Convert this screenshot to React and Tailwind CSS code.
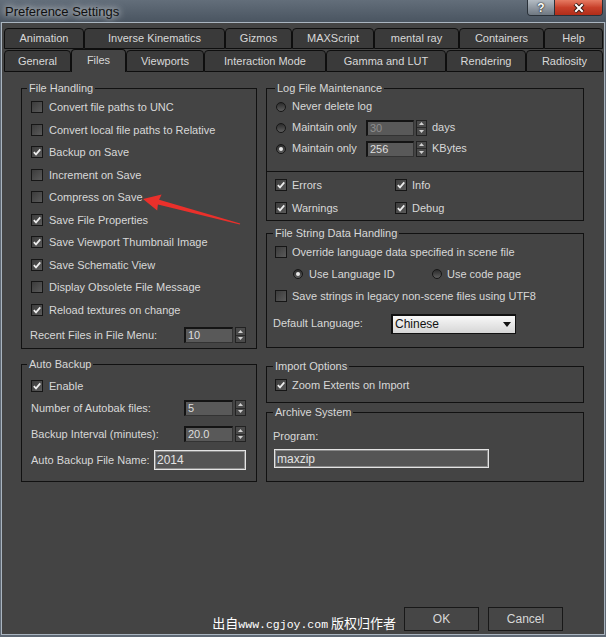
import React from "react";

const row1 = [
  ["Animation", "w-[80px]"],
  ["Inverse Kinematics", "w-[141px]"],
  ["Gizmos", "w-[67px]"],
  ["MAXScript", "w-[82px]"],
  ["mental ray", "w-[85px]"],
  ["Containers", "w-[85px]"],
  ["Help", "w-[59px]"],
];

const row2 = [
  ["General", "w-[67px]"],
  ["Files", "w-[55px]", true],
  ["Viewports", "w-[78px]"],
  ["Interaction Mode", "w-[122px]"],
  ["Gamma and LUT", "w-[120px]"],
  ["Rendering", "w-[80px]"],
  ["Radiosity", "w-[77px]"],
];

const fileHandling = [
  ["Convert file paths to UNC", false],
  ["Convert local file paths to Relative", false],
  ["Backup on Save", true],
  ["Increment on Save", false],
  ["Compress on Save", false],
  ["Save File Properties", true],
  ["Save Viewport Thumbnail Image", true],
  ["Save Schematic View", true],
  ["Display Obsolete File Message", false],
  ["Reload textures on change", true],
];

function Check({ on }) {
  return (
    <span className="w-[12px] h-[12px] shrink-0 border border-[#161616] bg-linear-to-br from-[#3c3c3c] to-[#5a5a5a] flex items-center justify-center">
      {on && (
        <svg width="10" height="10" viewBox="0 0 10 10">
          <path d="M1.8 5.2 L4 7.4 L8.3 2.4" fill="none" stroke="#eeeeee" strokeWidth="1.7" />
        </svg>
      )}
    </span>
  );
}

function Radio({ on }) {
  return (
    <span className="w-[10px] h-[10px] shrink-0 rounded-full border border-[#161616] bg-linear-to-b from-[#2c2c2c] to-[#5e5e5e] flex items-center justify-center">
      {on && <span className="w-[4px] h-[4px] rounded-full bg-[#e8e8e8]" />}
    </span>
  );
}

function Legend({ children, className = "ml-[6px]" }) {
  return (
    <div className={`-mt-[8px] ${className} self-start px-[2px] h-[14px] leading-[14px] bg-[#444444]`}>
      {children}
    </div>
  );
}

function Spinner() {
  return (
    <div className="ml-[2px] w-[11px] h-[16px] flex flex-col border border-[#222] bg-[#4a4a4a]">
      <div className="flex-1 flex items-center justify-center border-b border-[#2a2a2a]">
        <svg width="5" height="3" viewBox="0 0 5 3">
          <path d="M0 3 L2.5 0 L5 3Z" fill="#d0d0d0" />
        </svg>
      </div>
      <div className="flex-1 flex items-center justify-center">
        <svg width="5" height="3" viewBox="0 0 5 3">
          <path d="M0 0 L5 0 L2.5 3Z" fill="#d0d0d0" />
        </svg>
      </div>
    </div>
  );
}

function Field({ value, w = "w-[49px]", dim }) {
  return (
    <div className="flex items-center">
      <div
        className={`${w} h-[16px] bg-[#595959] border-t-2 border-l-2 border-r border-b border-t-[#141414] border-l-[#141414] border-r-[#333] border-b-[#333] pl-[2px] leading-[12px] ${
          dim ? "text-[#8e8e8e]" : "text-[#dedede]"
        }`}
      >
        {value}
      </div>
      <Spinner />
    </div>
  );
}

function TextBox({ value, w, h }) {
  return (
    <div className={`${w} ${h} border border-[#e4e4e4] shadow-[inset_0_0_0_1px_#8a8a8a] bg-[#555555] pl-[2px] flex items-center text-[#e2e2e2] text-[12px]`}>
      {value}
    </div>
  );
}

function CheckRow({ label, on, className = "" }) {
  return (
    <div className={`flex items-center gap-[5px] ${className}`}>
      <Check on={on} />
      <span>{label}</span>
    </div>
  );
}

function Tab({ label, w, active, h }) {
  if (active) {
    return (
      <div className={`${w} h-[23px] border-x border-t border-[#0e0e0e] rounded-t-[4px] bg-[#444444] flex items-center justify-center pb-[1px]`}>
        {label}
      </div>
    );
  }
  return (
    <div className={`${w} ${h} border border-[#0e0e0e] rounded-t-[4px] bg-[#3a3a3a] flex items-center justify-center`}>
      {label}
    </div>
  );
}

export default function App() {
  return (
    <div className="relative w-[606px] h-[637px] overflow-hidden flex flex-col bg-[#5f6975] font-['Liberation_Sans',Arial,sans-serif] text-[11px] text-[#d8d8d8]">
      {/* title bar */}
      <div className="h-[22px] shrink-0 flex justify-between items-start bg-linear-to-b from-[#636e7a] to-[#4a5561]">
        <div className="pl-[5px] pt-[2px] text-[13px] text-[#101010] [text-shadow:0_0_6px_rgba(255,255,255,0.85),0_0_10px_rgba(255,255,255,0.5)]">
          Preference Settings
        </div>
        <div className="mr-[3px] flex h-[16px] border border-t-0 border-[#2a3139] rounded-b-[4px] overflow-hidden">
          <div className="w-[27px] bg-linear-to-b from-[#b4bcc4] to-[#6f7882] flex items-center justify-center border-r border-[#2a3139] text-white font-bold text-[12px] leading-none [text-shadow:0_0_2px_#222,0_0_1px_#000]">
            ?
          </div>
          <div className="w-[47px] bg-linear-to-b from-[#e67a62] via-[#c8402a] to-[#b02d1a] flex items-center justify-center">
            <svg width="12" height="10" viewBox="0 0 12 10">
              <path d="M2 1 L10 9 M10 1 L2 9" stroke="#3a1a14" strokeWidth="4" />
              <path d="M2.3 1.3 L9.7 8.7 M9.7 1.3 L2.3 8.7" stroke="#ffffff" strokeWidth="2" />
            </svg>
          </div>
        </div>
      </div>

      <div className="flex-1 mx-[1px] mb-[2px] border border-[#aab5c0] bg-[#444444] flex flex-col">
        {/* tabs */}
        <div className="pt-[5px] pl-[2px] pr-[1px]">
          <div className="flex h-[21px]">
            {row1.map(([l, w]) => (
              <Tab key={l} label={l} w={w} h="h-[21px]" />
            ))}
          </div>
          <div className="flex items-end h-[22px] mt-[1px]">
            {row2.map(([l, w, a]) => (
              <Tab key={l} label={l} w={w} active={a} h="h-[22px]" />
            ))}
          </div>
        </div>

        {/* page */}
        <div className="flex pl-[19px] pt-[16px]">
          {/* left column */}
          <div className="w-[236px] flex flex-col">
            <div className="h-[261px] border border-[#111] flex flex-col">
              <Legend className="ml-[5px]">File Handling</Legend>
              <div className="pt-[1px] pl-[9px]">
                {fileHandling.map(([l, on]) => (
                  <div key={l} className="h-[22.5px] flex items-center gap-[6px]">
                    <Check on={on} />
                    <span>{l}</span>
                  </div>
                ))}
              </div>
              <div className="mt-[3px] h-[22px] pl-[8px] flex items-center">
                <span className="w-[154px]">Recent Files in File Menu:</span>
                <Field value="10" />
              </div>
            </div>

            <div className="mt-[15px] h-[118px] border border-[#111] flex flex-col">
              <Legend className="ml-[5px]">Auto Backup</Legend>
              <div className="mt-[4px] h-[22px] pl-[9px] flex items-center gap-[6px]">
                <Check on />
                <span>Enable</span>
              </div>
              <div className="h-[22px] pl-[9px] flex items-center">
                <span className="w-[153px]">Number of Autobak files:</span>
                <Field value="5" />
              </div>
              <div className="mt-[4px] h-[22px] pl-[9px] flex items-center">
                <span className="w-[153px]">Backup Interval (minutes):</span>
                <Field value="20.0" />
              </div>
              <div className="mt-[4px] h-[22px] pl-[9px] flex items-center">
                <span className="w-[123px]">Auto Backup File Name:</span>
                <TextBox value="2014" w="w-[92px]" h="h-[20px]" />
              </div>
            </div>
          </div>

          {/* right column */}
          <div className="ml-[9px] w-[318px] flex flex-col">
            <div className="h-[133px] border border-[#111] flex flex-col">
              <Legend className="ml-[8px]">Log File Maintenance</Legend>
              <div className="h-[76px] pt-[1px] pl-[9px]">
                <div className="h-[21px] flex items-center gap-[6px]">
                  <Radio />
                  <span>Never delete log</span>
                </div>
                <div className="h-[21px] flex items-center gap-[6px]">
                  <Radio />
                  <span className="w-[68px]">Maintain only</span>
                  <Field value="30" w="w-[48px]" dim />
                  <span className="ml-[-1px]">days</span>
                </div>
                <div className="h-[21px] flex items-center gap-[6px]">
                  <Radio on />
                  <span className="w-[68px]">Maintain only</span>
                  <Field value="256" w="w-[48px]" />
                  <span className="ml-[-1px]">KBytes</span>
                </div>
              </div>
              <div className="border-t border-[#111] pt-[2px] pl-[8px] flex flex-col gap-[1px]">
                <div className="h-[22px] flex items-center">
                  <CheckRow label="Errors" on className="w-[120px]" />
                  <CheckRow label="Info" on />
                </div>
                <div className="h-[22px] flex items-center">
                  <CheckRow label="Warnings" on className="w-[120px]" />
                  <CheckRow label="Debug" on />
                </div>
              </div>
            </div>

            <div className="mt-[12px] h-[115px] border border-[#111] flex flex-col">
              <Legend>File String Data Handling</Legend>
              <div className="pt-[1px] pl-[8px]">
                <CheckRow label="Override language data specified in scene file" className="h-[22px]" />
                <div className="h-[22px] pl-[18px] flex items-center">
                  <div className="w-[139px] flex items-center gap-[6px]">
                    <Radio on />
                    <span>Use Language ID</span>
                  </div>
                  <div className="flex items-center gap-[5px]">
                    <Radio />
                    <span>Use code page</span>
                  </div>
                </div>
                <CheckRow label="Save strings in legacy non-scene files using UTF8" className="h-[22px]" />
              </div>
              <div className="mt-[6px] h-[21px] pl-[6px] flex items-center">
                <span className="w-[118px]">Default Language:</span>
                <div className="w-[125px] h-[20px] border-2 border-r border-b border-[#111] bg-linear-to-b from-[#f8f8f8] to-[#d6d6d6] flex items-center justify-between pl-[2px] pr-[4px] text-[#111] text-[12px]">
                  <span>Chinese</span>
                  <svg width="8" height="5" viewBox="0 0 8 5">
                    <path d="M0 0 L8 0 L4 5Z" fill="#111" />
                  </svg>
                </div>
              </div>
            </div>

            <div className="mt-[18px] h-[37px] border border-[#111] flex flex-col">
              <Legend>Import Options</Legend>
              <CheckRow label="Zoom Extents on Import" on className="mt-[1px] h-[22px] pl-[8px]" />
            </div>

            <div className="mt-[9px] h-[70px] border border-[#111] flex flex-col">
              <Legend>Archive System</Legend>
              <div className="mt-[6px] h-[22px] pl-[6px] flex items-center">Program:</div>
              <div className="mt-[2px] ml-[7px]">
                <TextBox value="maxzip" w="w-[215px]" h="h-[19px]" />
              </div>
            </div>
          </div>
        </div>

        {/* buttons */}
        <div className="mt-auto flex justify-end items-end pr-[41px] pb-[3px]">
          <div className="mr-[8px] -mb-[1px] text-white text-[13px] leading-[15px] font-['Noto_Sans_CJK_SC',sans-serif] whitespace-nowrap">
            出自<span className="font-['Liberation_Mono',monospace] text-[11.5px]">www.cgjoy.com</span> 版权归作者
          </div>
          <div className="w-[75px] h-[24px] border border-[#181818] bg-[#464646] flex items-center justify-center text-[12px]">
            OK
          </div>
          <div className="ml-[9px] w-[75px] h-[24px] border border-[#181818] bg-[#464646] flex items-center justify-center text-[12px]">
            Cancel
          </div>
        </div>
      </div>

      {/* annotation arrow */}
      <svg className="absolute inset-0 pointer-events-none" width="606" height="637" viewBox="0 0 606 637">
        <polygon
          points="143,199 161.6,194.6 159.1,199.8 240.2,223.4 239.8,224.6 157.9,204.6 157.2,210.4"
          fill="#ea302b"
        />
      </svg>
    </div>
  );
}
